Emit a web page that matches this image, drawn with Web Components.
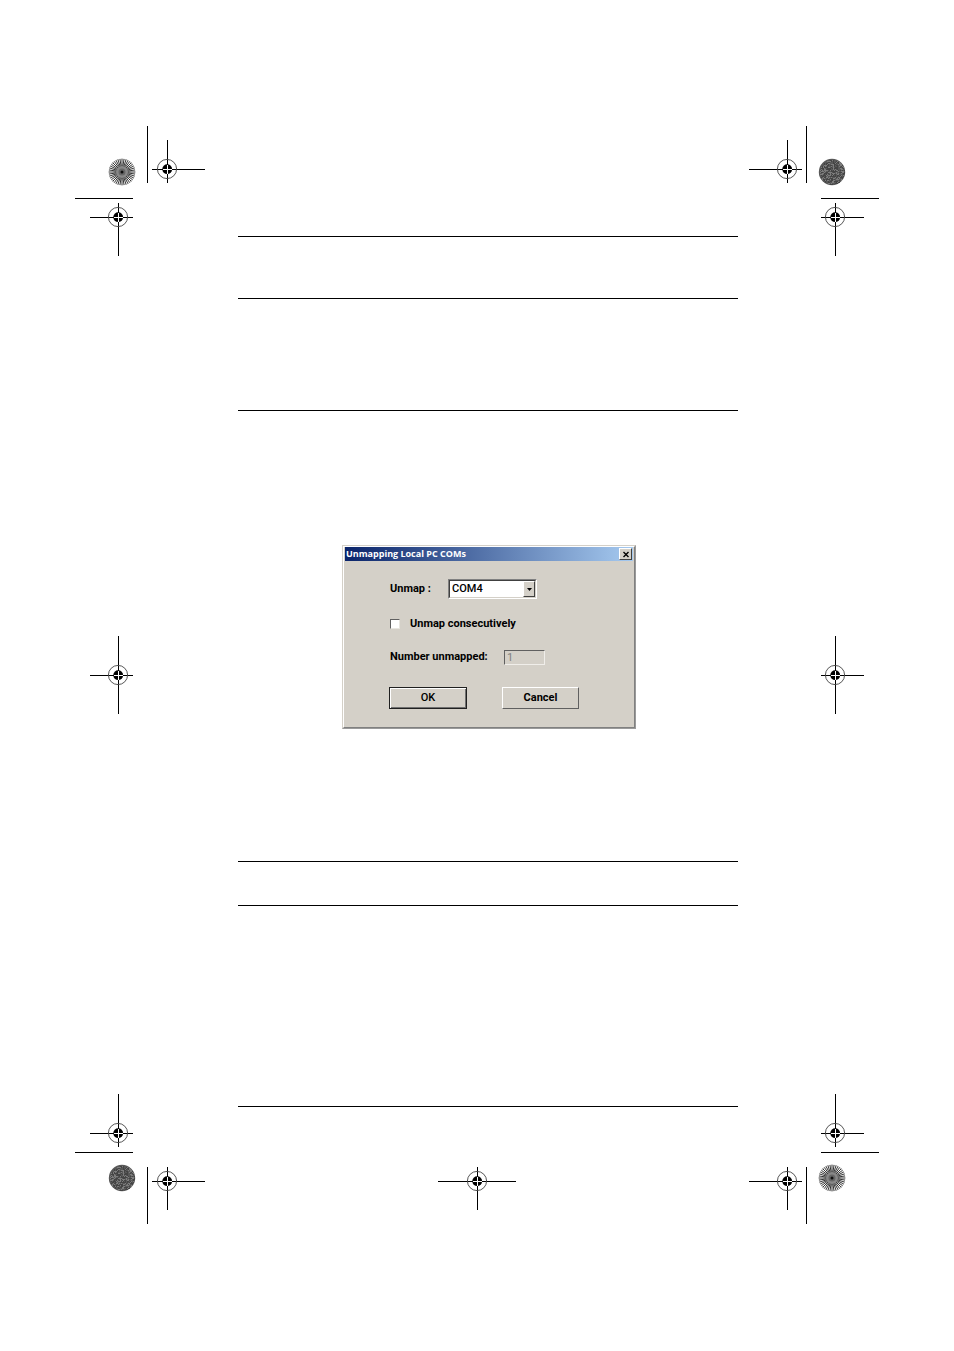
<!DOCTYPE html>
<html lang="en">
<head>
<meta charset="utf-8">
<title>Unmapping Local PC COMs</title>
<style>
  body { margin: 0; background: #fff; color: #000; font-family: Roboto, "Liberation Sans", Arial, sans-serif; }
</style>
</head>
<body>
<proof-sheet>
  <crop-corner slot="tl" corner="tl"></crop-corner>
  <crop-corner slot="tr" corner="tr"></crop-corner>
  <register-mark slot="left" side="left"></register-mark>
  <register-mark slot="right" side="right"></register-mark>
  <crop-corner slot="bl" corner="bl"></crop-corner>
  <crop-corner slot="br" corner="br"></crop-corner>
  <register-mark slot="bottom" side="bottom"></register-mark>

  <manual-page>
    <win-dialog heading="Unmapping Local PC COMs">
      <unmap-form></unmap-form>
    </win-dialog>
  </manual-page>
</proof-sheet>

<script>
// Registration target: two hairlines, a ring and a solid dot with a white cross.
// h and v are the [start, end] extents of the hairlines.
function target(cx, cy, h, v) {
  return `
    <path d="M${h[0]} ${cy + 0.5}H${h[1]}M${cx + 0.5} ${v[0]}V${v[1]}" stroke="#000"/>
    <circle cx="${cx}" cy="${cy}" r="9.6" fill="none" stroke="#444" stroke-width="0.9"/>
    <circle cx="${cx + 0.2}" cy="${cy + 0.2}" r="4.9" fill="#000"/>
    <path d="M${cx - 4} ${cy + 0.5}h9M${cx + 0.5} ${cy - 4}v9" stroke="#fff"/>`;
}

// Star target: fine rays round a grey core with a dark centre.
function star(cx, cy) {
  let d = '';
  for (let i = 0; i < 40; i++) {
    const a = i * Math.PI / 20;
    const x = Math.cos(a), y = Math.sin(a);
    d += `M${(cx + 5 * x).toFixed(2)} ${(cy + 5 * y).toFixed(2)}L${(cx + 13.2 * x).toFixed(2)} ${(cy + 13.2 * y).toFixed(2)}`;
  }
  return `<path d="${d}" stroke="#000" stroke-width="0.8"/>
    <circle cx="${cx}" cy="${cy}" r="6" fill="#888"/>
    <circle cx="${cx}" cy="${cy}" r="3.5" fill="#666"/>
    <circle cx="${cx}" cy="${cy}" r="1.5" fill="#111"/>
    <circle cx="${cx}" cy="${cy}" r="13" fill="none" stroke="#888" stroke-width="0.5"/>`;
}

// Screened tint patch: a grey disc with a fixed speckle.
function tint(cx, cy) {
  let dark = '', light = '', seed = 7;
  for (let y = -12; y < 13; y++) {
    for (let x = -12; x < 13; x++) {
      seed = (seed * 1103515245 + 12345) % 2147483648;
      if (x * x + y * y > 150) continue;
      const r = seed / 2147483648;
      if (r < 0.33) dark += `M${cx + x} ${cy + y}h1v1h-1z`;
      else if (r > 0.68) light += `M${cx + x} ${cy + y}h1v1h-1z`;
    }
  }
  return `<circle cx="${cx}" cy="${cy}" r="13.2" fill="#585858"/>
    <path d="${dark}" fill="#444"/><path d="${light}" fill="#7c7c7c"/>`;
}

class ProofSheet extends HTMLElement {
  constructor() {
    super();
    this.attachShadow({ mode: 'open' });
    this.shadowRoot.innerHTML = `
      <style>
        :host {
          display: grid;
          grid-template-columns: 130px 1fr 130px;
          grid-template-rows: 130px 1fr 130px;
          padding: 126px 75px 127px;
          min-height: 100vh;
          box-sizing: border-box;
        }
        main { grid-area: 1 / 2 / 4 / 3; }
        .tl { grid-area: 1 / 1; }
        .tr { grid-area: 1 / 3; }
        .left { grid-area: 2 / 1; align-self: center; padding-left: 15px; }
        .right { grid-area: 2 / 3; align-self: center; justify-self: end; padding-right: 15px; }
        .bl { grid-area: 3 / 1; }
        .br { grid-area: 3 / 3; }
        .bottom { grid-area: 3 / 2; justify-self: center; padding-top: 73px; }
      </style>
      <div class="tl"><slot name="tl"></slot></div>
      <div class="tr"><slot name="tr"></slot></div>
      <div class="left"><slot name="left"></slot></div>
      <div class="right"><slot name="right"></slot></div>
      <div class="bl"><slot name="bl"></slot></div>
      <div class="br"><slot name="br"></slot></div>
      <div class="bottom"><slot name="bottom"></slot></div>
      <main><slot></slot></main>
    `;
  }
}

class CropCorner extends HTMLElement {
  constructor() {
    super();
    this.attachShadow({ mode: 'open' });
  }

  connectedCallback() {
    const corner = this.getAttribute('corner');
    const top = corner[0] === 't';
    const left = corner[1] === 'l';

    const trimX = left ? 72 : 57;
    const trimY = top ? 72 : 58;
    const across = left ? [0, 58] : [72, 130];
    const down = top ? [0, 57] : [73, 130];

    const inner = target(left ? 92 : 38, top ? 43 : 87,
      left ? [77, 130] : [0, 53], top ? [14, 57] : [73, 116]);
    const outer = target(left ? 43 : 86, top ? 91 : 39,
      left ? [15, 58] : [72, 115], top ? [77, 130] : [0, 53]);
    const patch = (top === left ? star : tint)(left ? 47 : 83, top ? 46 : 84);

    this.shadowRoot.innerHTML = `
      <style>
        :host { display: block; }
        svg { display: block; }
      </style>
      <svg width="130" height="130" viewBox="0 0 130 130" aria-hidden="true">
        <path d="M${trimX + 0.5} ${down[0]}V${down[1]}M${across[0]} ${trimY + 0.5}H${across[1]}" stroke="#000"/>
        ${inner}${outer}${patch}
      </svg>
    `;
  }
}

class RegisterMark extends HTMLElement {
  constructor() {
    super();
    this.attachShadow({ mode: 'open' });
  }

  connectedCallback() {
    const side = this.getAttribute('side');
    const flat = side === 'bottom';
    const w = flat ? 78 : 43;
    const h = flat ? 43 : 78;
    const cx = { left: 28, right: 14, bottom: 39 }[side];
    const cy = flat ? 14 : 39;

    this.shadowRoot.innerHTML = `
      <style>
        :host { display: block; }
        svg { display: block; }
      </style>
      <svg width="${w}" height="${h}" viewBox="0 0 ${w} ${h}" aria-hidden="true">
        ${target(cx, cy, [0, w], [0, h])}
      </svg>
    `;
  }
}

class ManualPage extends HTMLElement {
  constructor() {
    super();
    this.attachShadow({ mode: 'open' });
    this.shadowRoot.innerHTML = `
      <style>
        :host { display: block; padding: 110px 11px 0 33px; }
        hr { margin: 0; border: 0; border-top: 1px solid #000; }
        .title { margin-bottom: 61px; }
        .intro { margin-bottom: 111px; }
        .figure { display: flex; justify-content: center; padding: 134px 0 132px 2px; }
        .note { margin-bottom: 43px; }
        .body { margin-bottom: 200px; }
      </style>
      <hr class="title">
      <hr class="intro">
      <hr>
      <div class="figure"><slot></slot></div>
      <hr class="note">
      <hr class="body">
      <hr>
    `;
  }
}

class WinDialog extends HTMLElement {
  constructor() {
    super();
    this.attachShadow({ mode: 'open' });
    this.shadowRoot.innerHTML = `
      <style>
        :host {
          display: block;
          width: 294px;
          box-sizing: border-box;
          background: #d4d0c8;
          border: 1px solid;
          border-color: #d4d0c8 #9a9a9a #9a9a9a #d4d0c8;
        }
        .frame {
          border: 1px solid;
          border-color: #fff #808080 #808080 #fff;
        }
        header {
          display: flex;
          align-items: center;
          justify-content: space-between;
          height: 14px;
          margin: 0 1px;
          padding: 0 1px;
          background: linear-gradient(to right, #0a246a, #a6caf0);
          color: #fff;
        }
        h1 {
          margin: 0;
          font: bold 9px/14px "Open Sans", "Noto Sans", sans-serif;
          white-space: nowrap;
        }
        button {
          display: flex;
          width: 13px;
          height: 12px;
          padding: 0;
          align-items: center;
          justify-content: center;
          background: #d4d0c8;
          border: 1px solid;
          border-color: #fff #404040 #404040 #fff;
        }
      </style>
      <div class="frame">
        <header>
          <h1></h1>
          <button type="button" aria-label="Close">
            <svg width="8" height="7" viewBox="0 0 8 7"><path d="M1.5 1L6.5 6M6.5 1L1.5 6" stroke="#000" stroke-width="1.4"/></svg>
          </button>
        </header>
        <slot></slot>
      </div>
    `;
  }

  connectedCallback() {
    this.shadowRoot.querySelector('h1').textContent = this.getAttribute('heading');
  }
}

class UnmapForm extends HTMLElement {
  constructor() {
    super();
    this.attachShadow({ mode: 'open' });
    this.shadowRoot.innerHTML = `
      <style>
        :host { display: block; }
        form {
          padding: 18px 46px 18px 45px;
          font: bold 11px/20px Roboto, "Liberation Sans", sans-serif;
        }
        .row { display: flex; align-items: center; height: 20px; padding-left: 1px; }
        .port label { width: 58px; }
        .check { margin-top: 15px; }
        .count { margin-top: 13px; }
        .count label { width: 114px; }

        .combo {
          display: grid;
          width: 89px;
          height: 20px;
          box-sizing: border-box;
          background: #fff;
          border: 1px solid;
          border-color: #808080 #fff #fff #808080;
        }
        .combo > * { grid-area: 1 / 1; }
        select {
          appearance: none;
          margin: 0;
          padding: 0 14px 0 2px;
          background: #fff;
          border: 1px solid;
          border-color: #404040 #d4d0c8 #d4d0c8 #404040;
          border-radius: 0;
          color: #000;
          font: 500 11px/16px Roboto, "Liberation Sans", sans-serif;
        }
        .arrow {
          display: flex;
          align-items: center;
          justify-content: center;
          justify-self: end;
          width: 12px;
          margin: 1px;
          box-sizing: border-box;
          background: #d4d0c8;
          border: 1px solid;
          border-color: #fff #404040 #404040 #fff;
          pointer-events: none;
        }

        input[type="checkbox"] {
          appearance: none;
          width: 10px;
          height: 10px;
          margin: 0 10px 0 0;
          background: #fff;
          border: 1px solid;
          border-color: #606060 #e8e6e0 #e8e6e0 #606060;
        }
        input[type="text"] {
          width: 41px;
          height: 15px;
          box-sizing: border-box;
          margin: 0;
          padding: 0 2px;
          background: #d4d0c8;
          border: 1px solid;
          border-color: #606060 #f0eeea #f0eeea #606060;
          border-radius: 0;
          color: #808080;
          font: 11px/13px Roboto, "Liberation Sans", sans-serif;
        }

        .actions { display: flex; gap: 35px; margin-top: 20px; }
        button {
          width: 77px;
          height: 22px;
          padding: 0;
          background: #d4d0c8;
          border: 1px solid;
          border-color: #fff #606060 #606060 #fff;
          border-radius: 0;
          color: #000;
          font: bold 11px/20px Roboto, "Liberation Sans", sans-serif;
        }
        button.default {
          width: 78px;
          border-color: #202020;
          box-shadow: inset 1px 1px #fff, inset -1px -1px #707070;
          font-weight: 500;
        }
      </style>
      <form>
        <div class="row port">
          <label for="port">Unmap :</label>
          <div class="combo">
            <select id="port"><option>COM4</option></select>
            <span class="arrow"><svg width="5" height="3" viewBox="0 0 5 3"><path d="M0 0H5L2.5 3Z"/></svg></span>
          </div>
        </div>
        <div class="row check">
          <input type="checkbox" id="consecutive">
          <label for="consecutive">Unmap consecutively</label>
        </div>
        <div class="row count">
          <label for="count">Number unmapped:</label>
          <input type="text" id="count" value="1" disabled>
        </div>
        <div class="actions">
          <button type="button" class="default">OK</button>
          <button type="button">Cancel</button>
        </div>
      </form>
    `;
  }
}

customElements.define('proof-sheet', ProofSheet);
customElements.define('crop-corner', CropCorner);
customElements.define('register-mark', RegisterMark);
customElements.define('manual-page', ManualPage);
customElements.define('win-dialog', WinDialog);
customElements.define('unmap-form', UnmapForm);
</script>
</body>
</html>
